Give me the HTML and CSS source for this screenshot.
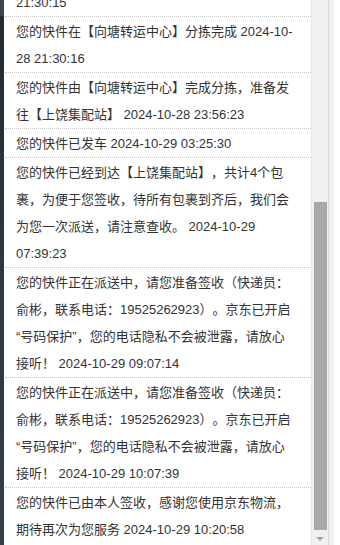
FILE: index.html
```html
<!DOCTYPE html>
<html lang="zh-CN">
<head>
  <meta charset="UTF-8">
  <title>物流详情</title>
  <link rel="stylesheet" href="styles.css">
</head>
<body>
  <div class="page">
    <div class="edge"></div>
    <div class="viewport">
      <ul class="track-list">
        <li>您的快件已到达【向塘转运中心】 2024-10-28 21:30:15</li>
        <li>您的快件在【向塘转运中心】分拣完成 2024-10-28 21:30:16</li>
        <li>您的快件由【向塘转运中心】完成分拣，准备发往【上饶集配站】 2024-10-28 23:56:23</li>
        <li>您的快件已发车 2024-10-29 03:25:30</li>
        <li>您的快件已经到达【上饶集配站】，共计4个包裹，为便于您签收，待所有包裹到齐后，我们会为您一次派送，请注意查收。 2024-10-29 07:39:23</li>
        <li>您的快件正在派送中，请您准备签收（快递员：俞彬，联系电话：19525262923）。京东已开启“号码保护”，您的电话隐私不会被泄露，请放心接听！ 2024-10-29 09:07:14</li>
        <li>您的快件正在派送中，请您准备签收（快递员：俞彬，联系电话：19525262923）。京东已开启“号码保护”，您的电话隐私不会被泄露，请放心接听！ 2024-10-29 10:07:39</li>
        <li>您的快件已由本人签收，感谢您使用京东物流，期待再次为您服务 2024-10-29 10:20:58</li>
      </ul>
    </div>
    <div class="scrollbar">
      <div class="thumb"></div>
      <div class="arrow"></div>
    </div>
    <div class="frame"></div>
  </div>
</body>
</html>
```

FILE: styles.css
```css
body {
  margin: 0;
  height: 545px;
  overflow: hidden;
  background: #fff;
  font-family: "Liberation Sans", "Noto Sans CJK SC", sans-serif;
  font-size: 13px;
  color: #333;
}
.page {
  display: flex;
  height: 545px;
}
.edge {
  width: 4px;
  background: linear-gradient(#3c454c 0, #3c454c 16px, #232b31 16px, #2f3941 300px, #333d45 100%);
}
.viewport {
  width: 307px;
  overflow: hidden;
}
.track-list {
  list-style: none;
  margin: -40px 0 0 1px;
  padding: 0;
}
.track-list li {
  border-top: 1px dotted #c4c4c4;
  padding: 1px 17px 0 11px;
  line-height: 27px;
  text-spacing-trim: space-all;
}
.scrollbar {
  width: 16px;
  border-left: 1px solid #e9e9e9;
  background: #f0f0f0;
  display: flex;
  flex-direction: column;
  align-items: center;
}
.thumb {
  width: 13px;
  margin-top: 202px;
  flex: 1;
  background: #a8a8a8;
}
.arrow {
  height: 15px;
  width: 0;
  display: flex;
  align-items: center;
}
.arrow::before {
  content: "";
  margin-top: 2px;
  border-left: 4px solid transparent;
  border-right: 4px solid transparent;
  border-top: 4px solid #a3a3a3;
  margin-left: -4px;
}
.frame {
  width: 5px;
  border-left: 1px solid #d6d6d6;
  background: #f0f0f0;
}
```
